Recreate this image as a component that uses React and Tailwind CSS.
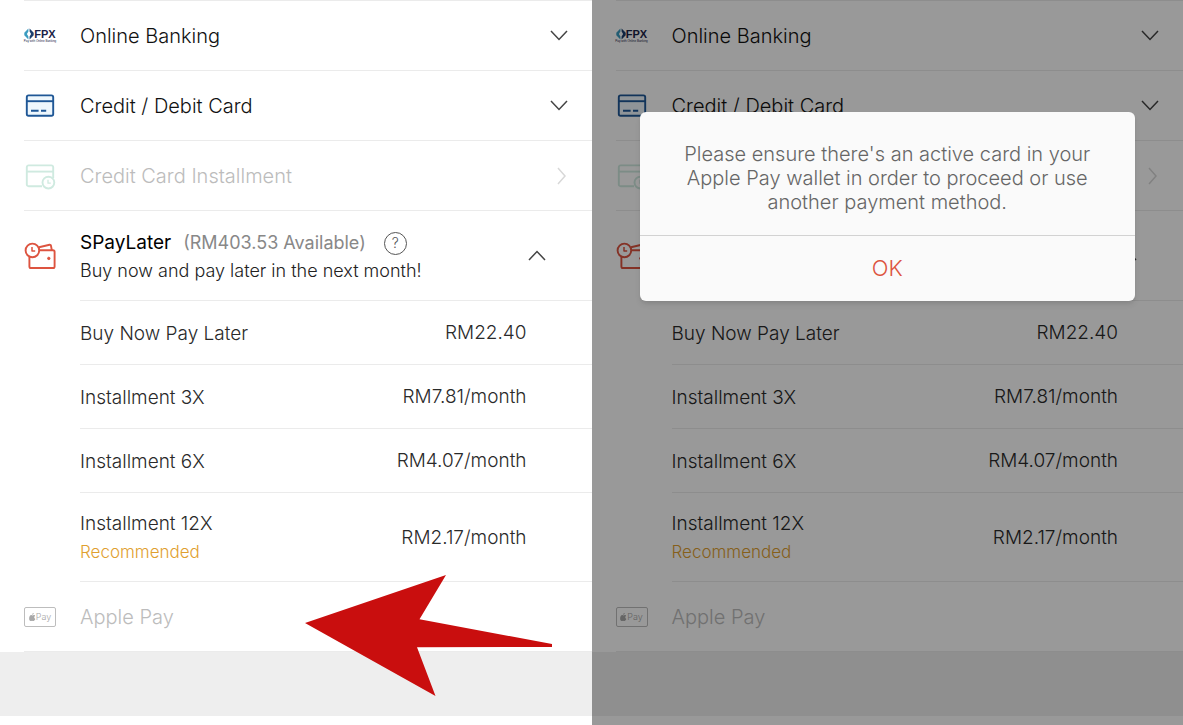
import React from 'react';

const installments = [
    { name: 'Buy Now Pay Later', price: 'RM22.40' },
    { name: 'Installment 3X', price: 'RM7.81/month' },
    { name: 'Installment 6X', price: 'RM4.07/month' },
    { name: 'Installment 12X', price: 'RM2.17/month', recommended: true },
];

const FpxLogo = () => (
    <span className="w-8 shrink-0 flex flex-col items-center text-[#1b2347] font-['Liberation_Sans',sans-serif]">
        <span className="flex items-center">
            <svg width="10" height="12" viewBox="0 0 10 12" aria-hidden="true">
                <path d="M4.4 0.6v3L2.9 6l1.5 2.4v3L0.3 7.2V4.8z" fill="#3b9cc0" />
                <path d="M5.6 0.6v3L7.1 6 5.6 8.4v3l4.1-4.2V4.8z" fill="#1d3f6e" />
            </svg>
            <span className="text-[11px] leading-3 font-bold">FPX</span>
        </span>
        <span className="text-[3px] leading-[3px] font-normal whitespace-nowrap">Pay with Online Banking</span>
    </span>
);

const CardIcon = () => (
    <svg className="shrink-0" width="32" height="32" viewBox="0 0 32 32" fill="none" stroke="#1f5796" strokeWidth="1.9" aria-hidden="true">
        <rect x="2.8" y="5.4" width="26.4" height="20.4" rx="1.8" fill="#eef7fd" />
        <path d="M2.8 11.2h26.4" />
        <path d="M7 20.8h7.6M17 20.8h5.2" />
    </svg>
);

const CardClockIcon = () => (
    <svg className="shrink-0" width="32" height="32" viewBox="0 0 32 32" fill="none" stroke="#cfeae0" strokeWidth="1.9" aria-hidden="true">
        <path d="M18 26.2H4.6a1.8 1.8 0 0 1-1.8-1.8V7.2a1.8 1.8 0 0 1 1.8-1.8h22.8a1.8 1.8 0 0 1 1.8 1.8V18" />
        <path d="M2.8 11.6h26.4" />
        <circle cx="24.4" cy="22.6" r="5.9" fill="#fff" />
        <path d="M24 19.8v3.4h2.8" strokeWidth="1.3" />
    </svg>
);

const WalletIcon = () => (
    <svg className="shrink-0" width="32" height="32" viewBox="0 0 32 32" fill="none" stroke="#dd5440" strokeWidth="1.9" strokeLinejoin="round" aria-hidden="true">
        <path d="M14.5 10.2H29a1.6 1.6 0 0 1 1.6 1.6v14.6a1.6 1.6 0 0 1-1.6 1.6H7a1.6 1.6 0 0 1-1.6-1.6V17" />
        <path d="M15 7.2l10.6-2.4a1.2 1.2 0 0 1 1.4 1l.8 4.4" />
        <circle cx="8.4" cy="10.4" r="6.8" fill="#fff" />
        <path d="M8 7v4h3.2" strokeWidth="1.5" />
        <circle cx="24.8" cy="18.4" r="1.2" fill="#dd5440" strokeWidth="1" />
    </svg>
);

const ApplePayIcon = () => (
    <span className="w-8 h-5 shrink-0 border border-[#bdbdbd] rounded-xs flex items-center justify-center text-[#a8a8a8]">
        <svg width="7" height="8" viewBox="0 0 14 17" fill="#a8a8a8" aria-hidden="true">
            <path d="M9.6 0c.1 1-.3 2-.9 2.7-.6.7-1.5 1.2-2.4 1.1-.1-1 .3-2 .9-2.6C7.8.5 8.8.1 9.6 0z" />
            <path d="M12.6 5.7c-.1.1-1.9 1.1-1.9 3.3 0 2.6 2.3 3.5 2.3 3.5s-.4 1.3-1.3 2.5c-.8 1.1-1.6 2-2.8 2s-1.5-.7-2.9-.7-1.8.7-2.9.7-1.9-1-2.8-2.3C-.3 13-.6 8.4 1.5 6c.7-.9 1.7-1.5 2.8-1.5s2.1.8 2.8.8c.7 0 1.900-.9 3.2-.8.6 0 1.7.2 2.3 1.2z" />
        </svg>
        <span className="text-[9px] leading-3">Pay</span>
    </span>
);

const Chevron = ({ d, w = 18, h = 11, color = '#444' }) => (
    <svg className="shrink-0" width={w} height={h} fill="none" stroke={color} strokeWidth="1.5" aria-hidden="true">
        <path d={d} />
    </svg>
);

const Method = ({ icon, name, arrow, disabled, expanded }) => (
    <button
        type="button"
        disabled={disabled}
        aria-expanded={expanded}
        className="w-full min-h-[70px] pr-6 flex items-center gap-6 border-b border-[#ebebeb] text-left text-[20px] font-light text-[#111] disabled:text-[#bcbcbc]"
    >
        {icon}
        <span className="grow">{name}</span>
        {arrow}
    </button>
);

const SPayLater = () => (
    <div className="flex gap-6">
        <div className="h-[90px] flex items-center">
            <WalletIcon />
        </div>
        <div className="grow">
            <div className="min-h-[90px] pr-[46px] flex items-center justify-between border-b border-[#ebebeb]">
                <div className="pt-[3px]">
                    <div className="flex items-center">
                        <h2 className="text-[19px] leading-7 font-normal text-black">SPayLater</h2>
                        <span className="ml-3 text-[18px] leading-7 font-normal text-[#888]">(RM403.53 Available)</span>
                        <button
                            type="button"
                            aria-label="About SPayLater"
                            className="ml-[18px] w-[23px] h-[23px] shrink-0 rounded-full border border-[#555] text-[14px] leading-5 text-[#555]"
                        >
                            ?
                        </button>
                    </div>
                    <p className="text-[18px] leading-7 text-[#222]">Buy now and pay later in the next month!</p>
                </div>
                <button type="button" aria-label="Collapse SPayLater" aria-expanded="true">
                    <Chevron d="M1 10l8-8.5 8 8.5" />
                </button>
            </div>
            <ul>
                {installments.map((item) => (
                    <li key={item.name} className="border-b border-[#ebebeb] text-[#2a2a2a]">
                        <button
                            type="button"
                            className="w-full min-h-[63px] pt-4 pb-[14px] pr-[65px] flex items-center justify-between text-left"
                        >
                            <span>
                                <span className="block leading-[29px]">{item.name}</span>
                                {item.recommended && (
                                    <span className="block text-[17px] leading-[29px] text-[#dfa02f]">Recommended</span>
                                )}
                            </span>
                            <span>{item.price}</span>
                        </button>
                    </li>
                ))}
            </ul>
        </div>
    </div>
);

const PaymentMethods = ({ inert }) => (
    <div className="min-h-screen flex flex-col" inert={inert}>
        <div className="pl-6">
            <div className="border-t border-[#ebebeb]">
                <Method icon={<FpxLogo />} name="Online Banking" expanded={false} arrow={<Chevron d="M1 1l8 8.5 8-8.5" />} />
                <Method icon={<CardIcon />} name="Credit / Debit Card" expanded={false} arrow={<Chevron d="M1 1l8 8.5 8-8.5" />} />
                <Method
                    icon={<CardClockIcon />}
                    name="Credit Card Installment"
                    disabled
                    arrow={<Chevron d="M1 1l7 8-7 8" w={11} h={18} color="#d8d8d8" />}
                />
                <SPayLater />
                <Method icon={<ApplePayIcon />} name="Apple Pay" disabled />
            </div>
        </div>
        <div className="h-16 bg-[#eee]"></div>
    </div>
);

const CardAlert = () => (
    <div className="absolute inset-0 bg-black/40 px-12 pt-28">
        <div role="alertdialog" aria-labelledby="alert-text" className="bg-[#fafafa] rounded-md shadow-md text-center">
            <p id="alert-text" className="px-10 pt-[30px] pb-[21px] text-[20px] leading-6 font-light text-[#666]">
                Please ensure there's an active card in your Apple Pay wallet in order to proceed or use another payment method.
            </p>
            <button type="button" className="w-full h-[66px] border-t border-[#d2d2d2] text-[22px] text-[#dd5440]">
                OK
            </button>
        </div>
    </div>
);

const App = () => (
    <main className="min-h-screen grid grid-cols-2 bg-white font-['Inter',sans-serif] font-[350] text-[19px] overflow-hidden">
        <section className="relative">
            <PaymentMethods />
            <svg
                className="absolute right-10 top-[575px] pointer-events-none"
                width="247"
                height="121"
                viewBox="0 0 247 121"
                fill="#c90e0e"
                aria-hidden="true"
            >
                <path d="M0 48L141 0L114.5 44.3L247 69V72L112 72.3L130.5 121z" />
            </svg>
        </section>
        <section className="relative">
            <PaymentMethods inert />
            <CardAlert />
        </section>
    </main>
);

export default App;
